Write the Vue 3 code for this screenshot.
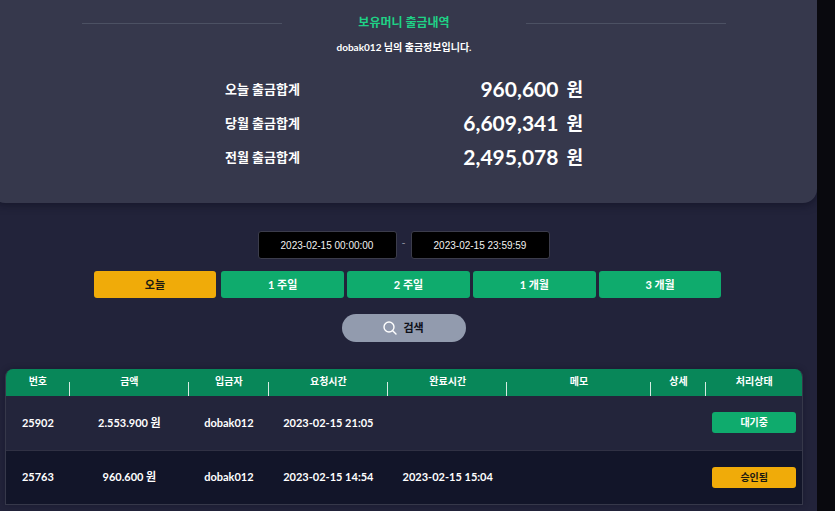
<script setup>
import { ref } from 'vue'

const totals = [
  { label: '오늘 출금합계', amount: '960,600' },
  { label: '당월 출금합계', amount: '6,609,341' },
  { label: '전월 출금합계', amount: '2,495,078' },
]

const from = ref('2023-02-15 00:00:00')
const to = ref('2023-02-15 23:59:59')

const periods = ['오늘', '1 주일', '2 주일', '1 개월', '3 개월']
const period = ref('오늘')

const columns = [
  { title: '번호', width: 8 },
  { title: '금액', width: 15 },
  { title: '입금자', width: 10 },
  { title: '요청시간', width: 15 },
  { title: '완료시간', width: 15 },
  { title: '메모', width: 18 },
  { title: '상세', width: 7 },
  { title: '처리상태', width: 12 },
]

const rows = [
  { id: '25902', amount: '2.553.900 원', name: 'dobak012', asked: '2023-02-15 21:05', done: '', status: '대기중', kind: 'wait' },
  { id: '25763', amount: '960.600 원', name: 'dobak012', asked: '2023-02-15 14:54', done: '2023-02-15 15:04', status: '승인됨', kind: 'ok' },
]
</script>

<template>
  <div class="page">
    <main class="main">
      <section class="card">
        <header class="heading">
          <span class="rule"></span>
          <h1>보유머니 출금내역</h1>
          <span class="rule"></span>
        </header>
        <p class="sub">dobak012 님의 출금정보입니다.</p>
        <dl class="totals">
          <div v-for="t in totals" :key="t.label" class="total">
            <dt>{{ t.label }}</dt>
            <dd><span>{{ t.amount }}</span> <span class="unit">원</span></dd>
          </div>
        </dl>
      </section>

      <form class="filter" @submit.prevent>
        <div class="dates">
          <input v-model="from" type="text" aria-label="시작 일시" />
          <span class="dash">-</span>
          <input v-model="to" type="text" aria-label="종료 일시" />
        </div>
        <div class="periods">
          <button
            v-for="p in periods"
            :key="p"
            type="button"
            class="period"
            :class="{ active: p === period }"
            @click="period = p"
          >{{ p }}</button>
        </div>
        <button type="submit" class="search">
          <svg width="14" height="14" viewBox="0 0 14 14" fill="none" stroke="#fff" stroke-width="1.4" stroke-linecap="round" aria-hidden="true">
            <circle cx="6" cy="6" r="5" />
            <path d="M9.7 9.7L13 13" />
          </svg>
          <span>검색</span>
        </button>
      </form>

      <div class="list">
        <table>
          <colgroup>
            <col v-for="c in columns" :key="c.title" :style="{ width: c.width + '%' }" />
          </colgroup>
          <thead>
            <tr>
              <th v-for="c in columns" :key="c.title" scope="col">{{ c.title }}</th>
            </tr>
          </thead>
          <tbody>
            <tr v-for="r in rows" :key="r.id">
              <td>{{ r.id }}</td>
              <td>{{ r.amount }}</td>
              <td>{{ r.name }}</td>
              <td>{{ r.asked }}</td>
              <td>{{ r.done }}</td>
              <td></td>
              <td></td>
              <td class="state"><span class="badge" :class="r.kind">{{ r.status }}</span></td>
            </tr>
          </tbody>
        </table>
      </div>
    </main>
    <div class="gutter"></div>
  </div>
</template>

<style>
body {
  margin: 0;
  background: #22233a;
}
</style>

<style scoped>
.page {
  display: flex;
  min-height: 100vh;
  overflow: hidden;
  color: #fff;
  font: 700 11px/16px Lato, "Noto Sans CJK KR", sans-serif;
}
.main {
  flex: 1;
  min-width: 0;
  background: #22233a;
}
.gutter {
  flex: none;
  width: 18px;
  background: #09090e;
}
.card {
  box-sizing: border-box;
  margin-left: -9px;
  padding: 13px 0 29px;
  background: #36384c;
  border-radius: 0 0 14px 14px;
  box-shadow: 0 2px 8px rgba(10, 10, 25, 0.5);
}
.heading {
  display: flex;
  align-items: center;
  justify-content: space-between;
  width: 78%;
  margin: 0 auto;
}
.rule {
  width: 31%;
  height: 1px;
  background: #4c5163;
}
h1 {
  margin: 0;
  color: #1fd286;
  font-size: 12px;
  line-height: 20px;
}
.sub {
  margin: 6px 0 0;
  text-align: center;
  font-size: 10px;
}
.totals {
  width: 358px;
  margin: 17px auto 0;
}
.total {
  display: flex;
  align-items: center;
  justify-content: space-between;
  height: 34px;
}
dt {
  font-size: 13px;
}
dd {
  display: flex;
  align-items: center;
  gap: 8px;
  margin: 0;
  font-size: 21px;
}
.unit {
  font-size: 18px;
}
.filter {
  display: flex;
  flex-direction: column;
  align-items: center;
  padding: 28px 10px 27px 0;
}
.dates {
  display: flex;
  gap: 5px;
}
input {
  box-sizing: border-box;
  width: 139px;
  height: 28px;
  padding: 0;
  border: 1px solid #3b3c4b;
  border-radius: 3px;
  background: #000;
  color: #f2f2f2;
  font: 10px "Liberation Sans", sans-serif;
  text-align: center;
}
.dash {
  width: 4px;
  line-height: 24px;
  color: #8d8f9d;
  font-weight: 400;
}
.periods {
  display: flex;
  gap: 3px;
  width: 628px;
  max-width: 100%;
  margin: 12px 0 0 8px;
}
button {
  border: 0;
  font: inherit;
  cursor: pointer;
}
.period {
  flex: 1;
  height: 27px;
  padding: 0;
  border-radius: 3px;
  background: #0fab6d;
  color: #fff;
}
.period.active {
  margin-right: 2px;
  background: #f0ab09;
  color: #1b1a12;
}
.search {
  display: flex;
  align-items: center;
  justify-content: center;
  gap: 6px;
  width: 124px;
  height: 28px;
  margin-top: 16px;
  border-radius: 14px;
  background: #929bae;
  color: #0d0f18;
}
.list {
  margin: 0 14px 0 5px;
  border: 1px solid #36384a;
  border-top: 0;
  border-radius: 8px 8px 0 0;
  overflow: hidden;
  box-shadow: 0 0 6px rgba(10, 10, 25, 0.3);
}
table {
  width: 100%;
  border-collapse: collapse;
  table-layout: fixed;
}
th {
  height: 27px;
  padding: 0 0 4px;
  box-sizing: border-box;
  background: linear-gradient(#d5ebe2, #d5ebe2) right bottom / 1px 14px no-repeat #088759;
  font-size: 10px;
}
th:last-child {
  background: #088759;
}
td {
  box-sizing: border-box;
  height: 54px;
  padding: 0;
  text-align: center;
  white-space: nowrap;
}
tbody tr {
  background: #23253b;
}
tbody tr:nth-child(even) {
  background: #121529;
}
tbody tr + tr td {
  border-top: 1px solid #303144;
}
.state {
  padding: 0 6px;
}
.badge {
  display: block;
  border-radius: 3px;
  font-size: 10px;
  line-height: 21px;
}
.badge.wait {
  background: #0fab6d;
}
.badge.ok {
  background: #f0ab09;
  color: #1b1a12;
}
</style>
